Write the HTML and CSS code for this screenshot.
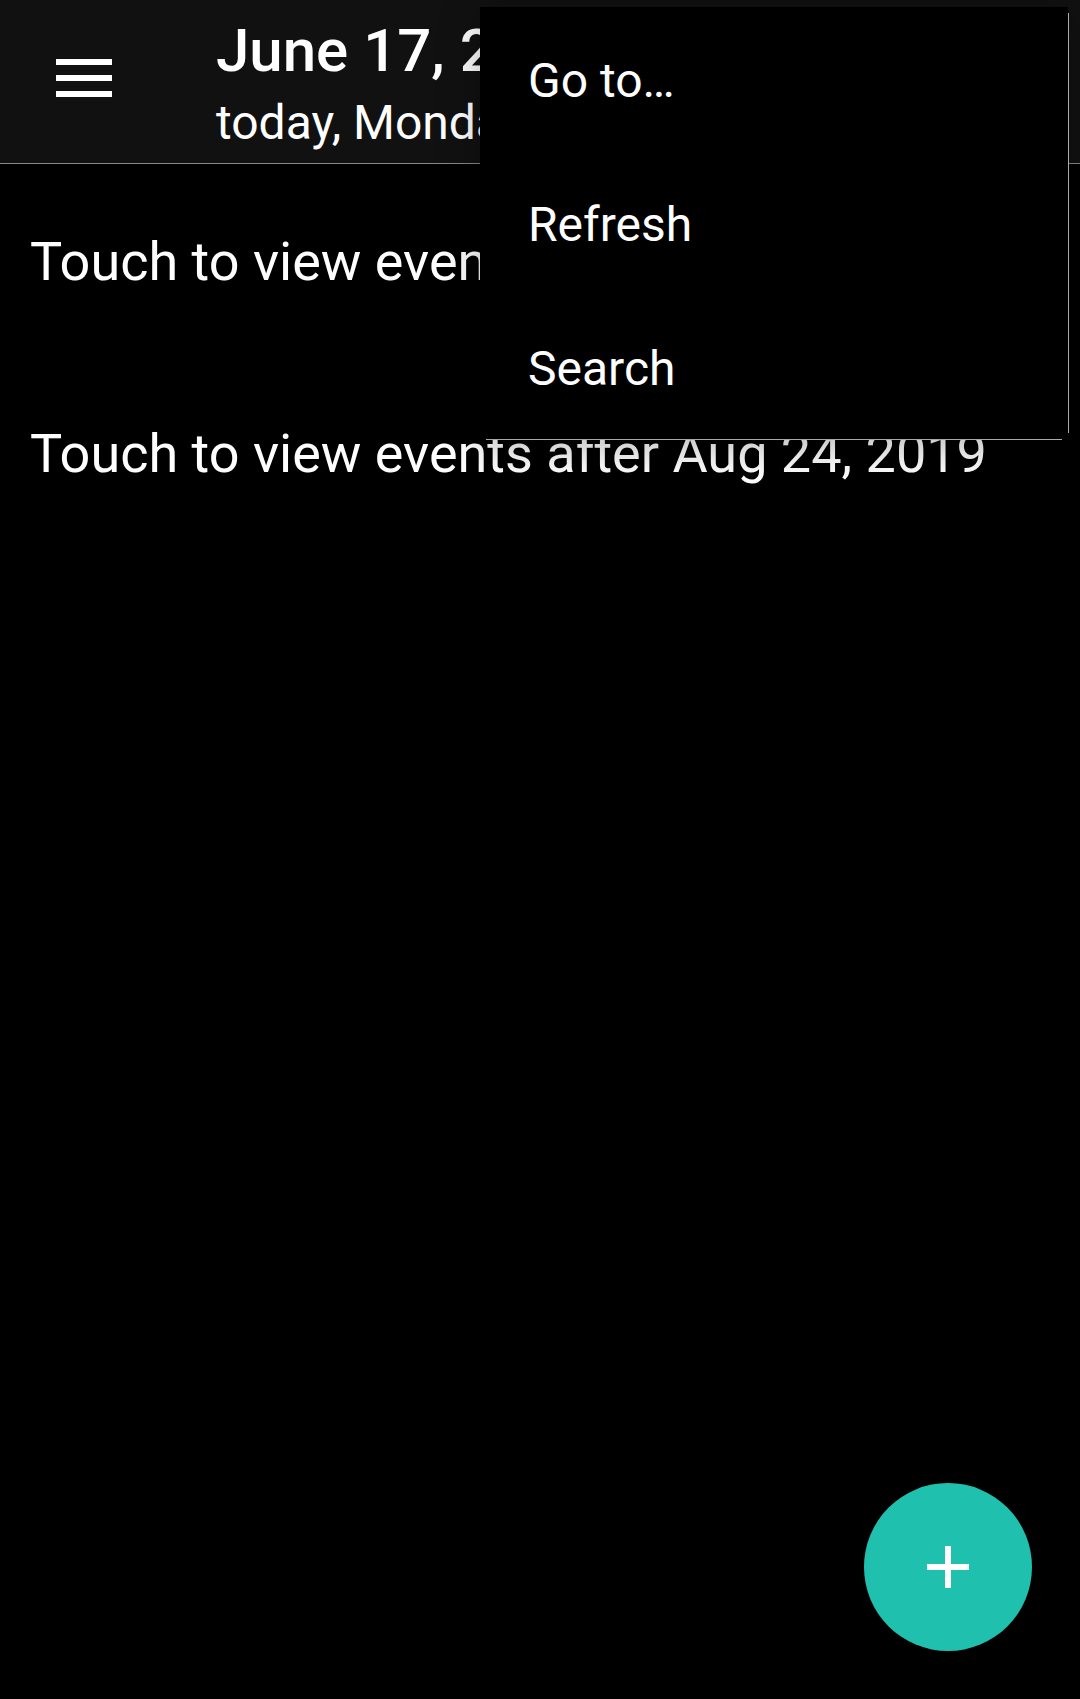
FILE: index.html
```html
<!DOCTYPE html>
<html lang="en">
<head>
<meta charset="utf-8">
<meta name="viewport" content="width=device-width, initial-scale=1">
<title>Agenda</title>
<link rel="stylesheet" href="styles.css">
</head>
<body>
<div class="app">
  <header class="bar">
    <button class="nav-button" type="button" aria-label="Open navigation">
      <svg width="56" height="38" viewBox="0 0 56 38" fill="currentColor" shape-rendering="crispEdges" aria-hidden="true">
        <path d="M0 0h56v6H0zM0 16h56v6H0zM0 32h56v6H0z"/>
      </svg>
    </button>
    <div class="heading">
      <h1 class="date">June 17, 2019</h1>
      <p class="day">today, Monday</p>
    </div>
  </header>
  <main class="agenda">
    <button class="agenda-row" type="button">Touch to view events before Jun 17, 2019</button>
    <button class="agenda-row" type="button">Touch to view events after Aug 24, 2019</button>
  </main>
  <div class="menu" role="menu">
    <button class="menu-item" type="button" role="menuitem">Go to…</button>
    <button class="menu-item" type="button" role="menuitem">Refresh</button>
    <button class="menu-item" type="button" role="menuitem">Search</button>
  </div>
  <button class="fab" type="button" aria-label="New event">
    <svg width="42" height="42" viewBox="0 0 42 42" fill="currentColor" shape-rendering="crispEdges" aria-hidden="true">
      <path d="M18 0h6v18h18v6H24v18h-6V24H0v-6h18z"/>
    </svg>
  </button>
</div>
</body>
</html>
```
FILE: styles.css
```css
* {
  box-sizing: border-box;
}

body {
  margin: 0;
  background: #000;
  color: #fff;
  font-family: Roboto, "Liberation Sans", sans-serif;
}

button {
  margin: 0;
  padding: 0;
  border: 0;
  background: none;
  color: inherit;
  font: inherit;
  cursor: pointer;
}

.app {
  position: relative;
  min-height: 100vh;
}

.bar {
  display: flex;
  align-items: flex-start;
  padding: 16px 0 12px;
  background: #111;
  border-bottom: 1px solid #888;
}

.nav-button {
  display: flex;
  align-items: center;
  justify-content: center;
  width: 168px;
  height: 124px;
}

.heading {
  display: flex;
  flex-direction: column;
  gap: 9px;
  margin-left: 48px;
  white-space: nowrap;
}

.date {
  margin: 0;
  font-size: 60px;
  font-weight: 500;
  line-height: 70px;
}

.day {
  margin: 0;
  font-size: 48px;
  line-height: 56px;
}

.agenda {
  display: flex;
  flex-direction: column;
}

.agenda-row {
  min-height: 192px;
  padding: 4px 30px 0;
  font-size: 54px;
  line-height: 64px;
  text-align: left;
}

/* Overflow menu, opened over the bar and the agenda */
.menu {
  position: absolute;
  top: 7px;
  right: 12px;
  display: flex;
  flex-direction: column;
  width: 588px;
  background: #000;
  box-shadow: 0 8px 40px rgba(0, 0, 0, 0.3);
}

.menu::before,
.menu::after {
  content: "";
  position: absolute;
  background: #aaa;
}

.menu::before {
  top: 6px;
  bottom: 6px;
  left: 100%;
  width: 1px;
}

.menu::after {
  top: 100%;
  right: 6px;
  left: 6px;
  height: 1px;
}

.menu-item {
  height: 144px;
  padding: 4px 48px 0;
  font-size: 48px;
  line-height: 56px;
  text-align: left;
}

.fab {
  position: fixed;
  right: 48px;
  bottom: 48px;
  display: flex;
  align-items: center;
  justify-content: center;
  width: 168px;
  height: 168px;
  border-radius: 50%;
  background: #1fc1ae;
}
```
